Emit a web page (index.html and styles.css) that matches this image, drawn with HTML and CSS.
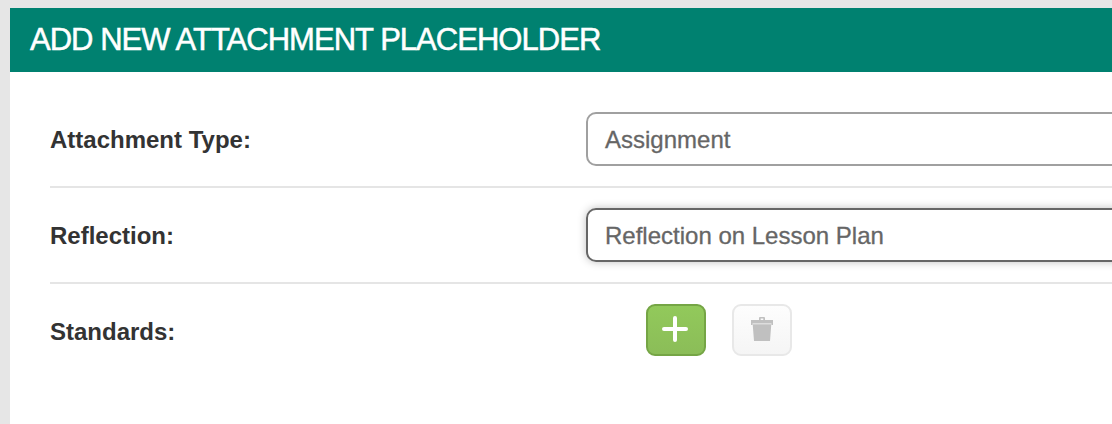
FILE: index.html
```html
<!DOCTYPE html>
<html lang="en">
<head>
    <meta charset="UTF-8">
    <meta name="viewport" content="width=device-width, initial-scale=1.0">
    <title>Add New Attachment Placeholder</title>
    <link rel="stylesheet" href="styles.css">
</head>
<body>
    <div class="panel">
        <h1 class="panel-title">ADD NEW ATTACHMENT PLACEHOLDER</h1>
        <div class="form">
            <div class="row">
                <div class="label">Attachment Type:</div>
                <div class="field" tabindex="0">Assignment</div>
            </div>
            <div class="row">
                <div class="label">Reflection:</div>
                <div class="field active" tabindex="0">Reflection on Lesson Plan</div>
            </div>
            <div class="row">
                <div class="label">Standards:</div>
                <div class="actions">
                    <button class="btn btn-add" type="button" aria-label="Add">
                        <svg width="26" height="26" viewBox="0 0 26 26">
                            <path d="M13 2v22M2 13h22" fill="none" stroke="#fff" stroke-width="4" stroke-linecap="round"/>
                        </svg>
                    </button>
                    <button class="btn btn-delete" type="button" aria-label="Delete">
                        <svg width="22" height="24" viewBox="0 0 22 24">
                            <path fill="#c0c0c0" fill-rule="evenodd" d="M0 3H8V1Q8 0 9 0H13Q14 0 14 1V3H22V8H20.5V6.5H1.5V8H0ZM9.7 1.5V3H12.3V1.5ZM1.7 7.3H20.3L19 24H3Z"/>
                        </svg>
                    </button>
                </div>
            </div>
        </div>
    </div>
</body>
</html>
```
FILE: styles.css
```css
* {
    box-sizing: border-box;
}

body {
    margin: 0;
    padding: 8px 0 0 10px;
    height: 424px;
    overflow: hidden;
    background: #e6e6e6;
    font-family: "Liberation Sans", Arial, sans-serif;
    font-size: 24px;
}

.panel {
    height: 416px;
    background: #fff;
    overflow: hidden;
}

.panel-title {
    margin: 0;
    padding-left: 20px;
    height: 64px;
    line-height: 63px;
    background: #008170;
    color: #fff;
    font-size: 31px;
    font-weight: normal;
    letter-spacing: -0.97px;
    white-space: nowrap;
    -webkit-text-stroke: 0.5px #fff;
}

.form {
    padding: 20px 0 0 40px;
}

.row {
    display: flex;
    align-items: center;
    height: 96px;
    border-bottom: 2px solid #e5e5e5;
}

.row:last-child {
    border-bottom: none;
    height: 92px;
}

.label {
    width: 536px;
    padding-top: 2px;
    color: #333;
    font-weight: bold;
}

.row:last-child .label {
    padding-top: 4px;
}

.field {
    flex: 1;
    height: 54px;
    margin-right: -20px;
    padding-left: 17px;
    line-height: 51px;
    border: 2px solid #a0a0a0;
    border-radius: 10px;
    color: #666;
    -webkit-text-stroke: 0.3px #666;
}

.field.active {
    border-color: #666;
    box-shadow: 0 0 8px rgba(0, 0, 0, 0.25);
}

.actions {
    display: flex;
    gap: 26px;
    padding-left: 60px;
}

.btn {
    display: flex;
    align-items: center;
    justify-content: center;
    width: 60px;
    height: 52px;
    padding: 0 2px 2px 0;
    border: 2px solid #e8e8e8;
    border-radius: 9px;
}

.btn-add {
    border-color: #75a545;
    background: linear-gradient(#92c95b, #8bbd58);
}

.btn-delete {
    padding-right: 0;
    background: linear-gradient(#fdfdfd, #f5f5f5);
}
```
